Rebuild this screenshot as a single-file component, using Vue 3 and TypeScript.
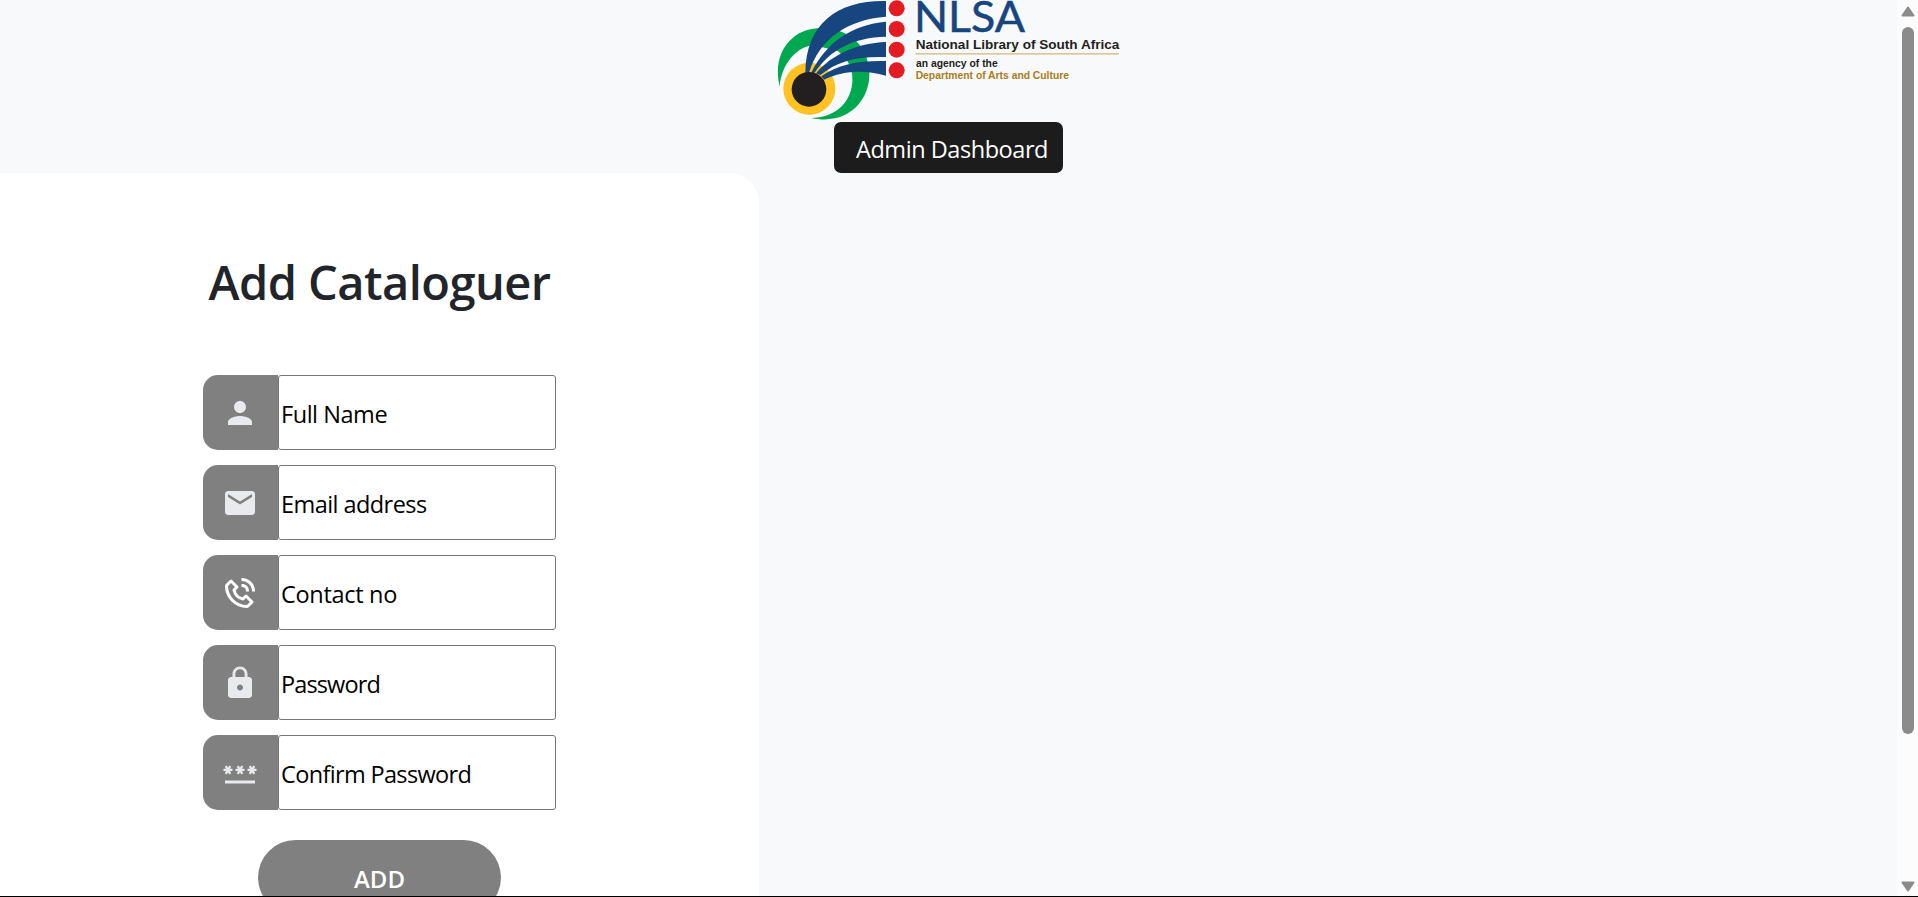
<script setup lang="ts">
import { ref } from 'vue'

interface Field {
  key: string
  label: string
  type: string
  color: string
  icon: string
}

const fields = ref<Field[]>([
  { key: 'name', label: 'Full Name', type: 'text', color: '#e8eaed', icon: 'M12 12c2.21 0 4-1.79 4-4s-1.79-4-4-4-4 1.79-4 4 1.79 4 4 4zm0 2c-2.67 0-8 1.34-8 4v2h16v-2c0-2.66-5.33-4-8-4z' },
  { key: 'email', label: 'Email address', type: 'text', color: '#e8eaed', icon: 'M20 4H4c-1.1 0-1.99.9-1.99 2L2 18c0 1.1.9 2 2 2h16c1.1 0 2-.9 2-2V6c0-1.1-.9-2-2-2zm0 4l-8 5-8-5V6l8 5 8-5v2z' },
  { key: 'contact', label: 'Contact no', type: 'text', color: '#ffffff', icon: 'M16.57 22a2 2 0 0 0 1.43-.59l2.71-2.71a1 1 0 0 0 0-1.41l-4-4a1 1 0 0 0-1.41 0l-1.6 1.59a7.55 7.55 0 0 1-3-1.59 7.62 7.62 0 0 1-1.59-3l1.59-1.6a1 1 0 0 0 0-1.41l-4-4a1 1 0 0 0-1.41 0L2.59 6A2 2 0 0 0 2 7.43 15.28 15.28 0 0 0 6.3 17.7 15.28 15.28 0 0 0 16.57 22zM6 5.41 8.59 8 7.3 9.29a1 1 0 0 0-.3.91 10.12 10.12 0 0 0 2.3 4.5 10.08 10.08 0 0 0 4.5 2.3 1 1 0 0 0 .91-.27L16 15.41 18.59 18l-2 2a13.28 13.28 0 0 1-8.87-3.71A13.28 13.28 0 0 1 4 7.41zM20 11h2a8.81 8.81 0 0 0-9-9v2a6.77 6.77 0 0 1 7 7zM13 8c2.1 0 3 .87 3 3h2c0-3.22-1.78-5-5-5z' },
  { key: 'password', label: 'Password', type: 'password', color: '#e8eaed', icon: 'M18 8h-1V6c0-2.76-2.24-5-5-5S7 3.24 7 6v2H6c-1.1 0-2 .9-2 2v10c0 1.1.9 2 2 2h12c1.1 0 2-.9 2-2V10c0-1.1-.9-2-2-2zm-6 9c-1.1 0-2-.9-2-2s.9-2 2-2 2 .9 2 2-.9 2-2 2zm3.1-9H8.9V6c0-1.71 1.39-3.1 3.1-3.1 1.71 0 3.1 1.39 3.1 3.1v2z' },
  { key: 'confirm', label: 'Confirm Password', type: 'password', color: '#e8eaed', icon: 'M2 17h20v2H2v-2zm1.15-4.05L4 11.47l.85 1.48 1.3-.75-.85-1.48H7v-1.5H5.3l.85-1.47L4.85 7 4 8.47 3.15 7l-1.3.75.85 1.47H1v1.5h1.7l-.85 1.48 1.3.75zm6.7-.75l1.3.75.85-1.48.85 1.48 1.3-.75-.85-1.48H15v-1.5h-1.7l.85-1.47-1.3-.75L12 8.47 11.15 7l-1.3.75.85 1.47H9v1.5h1.7l-.85 1.48zM23 9.22h-1.7l.85-1.47-1.3-.75L20 8.47 19.15 7l-1.3.75.85 1.47H17v1.5h1.7l-.85 1.48 1.3.75.85-1.48.85 1.48 1.3-.75-.85-1.48H23v-1.5z' },
])
</script>

<template>
  <div class="screen">
    <main class="page">
      <header class="header">
        <svg class="logo" viewBox="0 0 1050 366">
          <path fill="#00a94f" d="M29 260C15 200 28 147 69 113C100 86 155 75 208 93C262 111 297 158 298 222C299 300 235 378 124 354C190 352 240 315 247 248C250 210 235 175 203 153L130 135C80 141 35 190 29 260Z" />
          <circle cx="118" cy="266" r="78" fill="#ffc222" />
          <path fill="#17457f" d="M348 3C210 0 107 65 106 220L118 216C148 118 232 58 348 50Z" />
          <path fill="#17457f" d="M348 65C247 73 167 128 123 220L134 218C180 149 250 112 348 110Z" />
          <path fill="#17457f" d="M348 126C260 129 184 165 138 220L151 225C203 183 260 168 348 171Z" />
          <path fill="#17457f" d="M348 183C270 181 204 192 154 229L162 239C220 212 280 208 348 227Z" />
          <circle cx="117" cy="268" r="52" fill="#231f20" />
          <g fill="#e51b24">
            <circle cx="380" cy="25" r="24" />
            <circle cx="380" cy="87" r="24" />
            <circle cx="380" cy="149" r="24" />
            <circle cx="380" cy="211" r="24" />
          </g>
          <text class="logo-initials" x="432" y="97" textLength="333" lengthAdjust="spacingAndGlyphs">NLSA</text>
          <text class="logo-name" x="437" y="146" textLength="611" lengthAdjust="spacingAndGlyphs">National Library of South Africa</text>
          <path d="M437 161.500H1047" stroke="#d2b873" stroke-width="4" />
          <text class="logo-agency" x="438" y="200" textLength="245" lengthAdjust="spacingAndGlyphs">an agency of the</text>
          <text class="logo-dept" x="437" y="236" textLength="460" lengthAdjust="spacingAndGlyphs">Department of Arts and Culture</text>
        </svg>
        <a class="dashboard">Admin Dashboard</a>
      </header>

      <section class="card">
        <h1 class="title">Add Cataloguer</h1>
        <form class="form" @submit.prevent>
          <div v-for="f in fields" :key="f.key" class="row">
            <span class="badge">
              <svg class="icon" viewBox="0 0 24 24"><path :d="f.icon" :fill="f.color" /></svg>
            </span>
            <input class="input" :class="f.key" :type="f.type" :placeholder="f.label" />
          </div>
          <button class="submit" type="submit">ADD</button>
        </form>
      </section>
    </main>

    <aside class="scrollbar">
      <svg class="arrow" viewBox="0 0 14 11"><path d="M7 1.500L12.500 9.500H1.500Z" /></svg>
      <span class="thumb"></span>
      <svg class="arrow down" viewBox="0 0 14 11"><path d="M7 9.500L12.500 1.500H1.500Z" /></svg>
    </aside>
  </div>
</template>

<style>
body {
  margin: 0;
  overflow: hidden;
}
</style>

<style scoped>
.screen {
  box-sizing: border-box;
  display: flex;
  width: 100vw;
  height: 897px;
  overflow: hidden;
  border-bottom: 1px solid #000;
  background: #f8f9fb;
  font-family: "Open Sans", "Noto Sans", sans-serif;
}

.page {
  flex: 1;
  min-width: 0;
  overflow: hidden;
}

.header {
  display: flex;
  flex-direction: column;
  align-items: center;
}

.logo {
  display: block;
  width: 350px;
  height: 122px;
  margin-right: 7px;
}

.logo-initials {
  font: 130px Lato, sans-serif;
  fill: #17457f;
  stroke: #17457f;
  stroke-width: 1.5px;
}

.logo-name,
.logo-agency,
.logo-dept {
  font-family: "Liberation Sans", Arial, sans-serif;
  font-weight: 700;
  fill: #231f20;
}

.logo-name {
  font-size: 40px;
}

.logo-agency,
.logo-dept {
  font-size: 31px;
}

.logo-dept {
  fill: #ab7c1a;
}

.dashboard {
  box-sizing: border-box;
  width: 229px;
  height: 51px;
  padding-left: 22px;
  border-radius: 7px;
  background: #1c1c1c;
  color: #fff;
  font-size: 23.5px;
  line-height: 54px;
  letter-spacing: -0.45px;
  white-space: nowrap;
}

.card {
  box-sizing: border-box;
  width: 759px;
  height: 800px;
  padding-top: 80px;
  border-top-right-radius: 30px;
  background: #fff;
}

.title {
  margin: 0;
  height: 122px;
  color: #212529;
  font-size: 47px;
  font-weight: 600;
  line-height: 58px;
  letter-spacing: -0.55px;
  text-align: center;
  white-space: nowrap;
}

.form {
  display: flex;
  flex-direction: column;
  align-items: center;
  gap: 15px;
}

.row {
  display: flex;
  width: 353px;
  height: 75px;
}

.badge {
  box-sizing: border-box;
  width: 75px;
  height: 75px;
  padding: 20px 19px;
  border-radius: 15px 0 0 15px;
  background: #808080;
}

.icon {
  display: block;
  width: 36px;
  height: 36px;
}

.input {
  box-sizing: border-box;
  width: 278px;
  height: 75px;
  padding: 4px 2px 2px;
  border: 1px solid #767676;
  border-radius: 3px;
  background: #fff;
  font-family: inherit;
  font-size: 23.5px;
}

.input::placeholder {
  color: #000;
  opacity: 1;
}

.name {
  letter-spacing: -0.45px;
}

.email {
  letter-spacing: -0.56px;
}

.contact {
  letter-spacing: -0.3px;
}

.password {
  letter-spacing: -0.87px;
}

.confirm {
  letter-spacing: -0.65px;
}

.submit {
  width: 243px;
  height: 75px;
  margin-top: 15px;
  padding: 2px 0 0;
  border: 0;
  border-radius: 38px;
  background: #808080;
  color: #fff;
  font-family: inherit;
  font-size: 24px;
  font-weight: 600;
}

.scrollbar {
  box-sizing: border-box;
  display: flex;
  flex-direction: column;
  align-items: center;
  width: 21px;
  padding: 6px 0 4px;
  background: #fcfcfc;
}

.arrow {
  width: 14px;
  height: 11px;
  margin-left: 1px;
  fill: #8b8b8b;
  stroke: #8b8b8b;
  stroke-width: 2;
  stroke-linejoin: round;
}

.thumb {
  width: 12px;
  height: 707px;
  margin: 10px 0 0 1px;
  border-radius: 6px;
  background: #8b8b8b;
}

.down {
  margin-top: auto;
}
</style>
